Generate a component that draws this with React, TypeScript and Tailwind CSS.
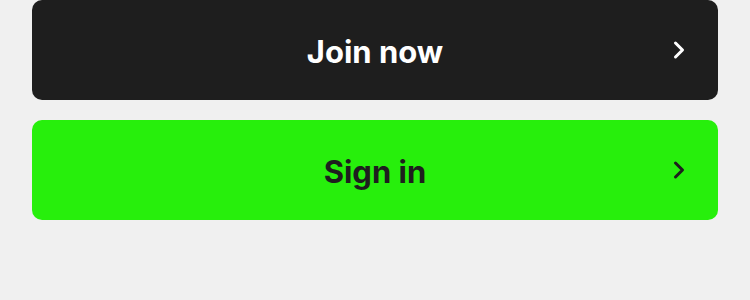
import { ChevronRight } from "lucide-react";

function ActionButton({ label, dark }: { label: string; dark?: boolean }) {
  return (
    <button
      className={
        dark
          ? "relative h-[100px] w-full rounded-[10px] bg-[#1e1e1e] text-white flex items-center justify-center"
          : "relative h-[100px] w-full rounded-[10px] bg-[#27ef0c] text-[#1e1e1e] flex items-center justify-center"
      }
    >
      <span className="text-[31px] font-bold leading-none pt-[2px]">{label}</span>
      <ChevronRight
        size={28}
        strokeWidth={2.6}
        className="absolute right-[25px] top-1/2 -translate-y-1/2"
      />
    </button>
  );
}

export default function App() {
  return (
    <div
      className="min-h-screen bg-[#f0f0f0] px-8 flex flex-col gap-5"
      style={{ fontFamily: "Inter, 'Liberation Sans', sans-serif" }}
    >
      <ActionButton label="Join now" dark />
      <ActionButton label="Sign in" />
    </div>
  );
}
